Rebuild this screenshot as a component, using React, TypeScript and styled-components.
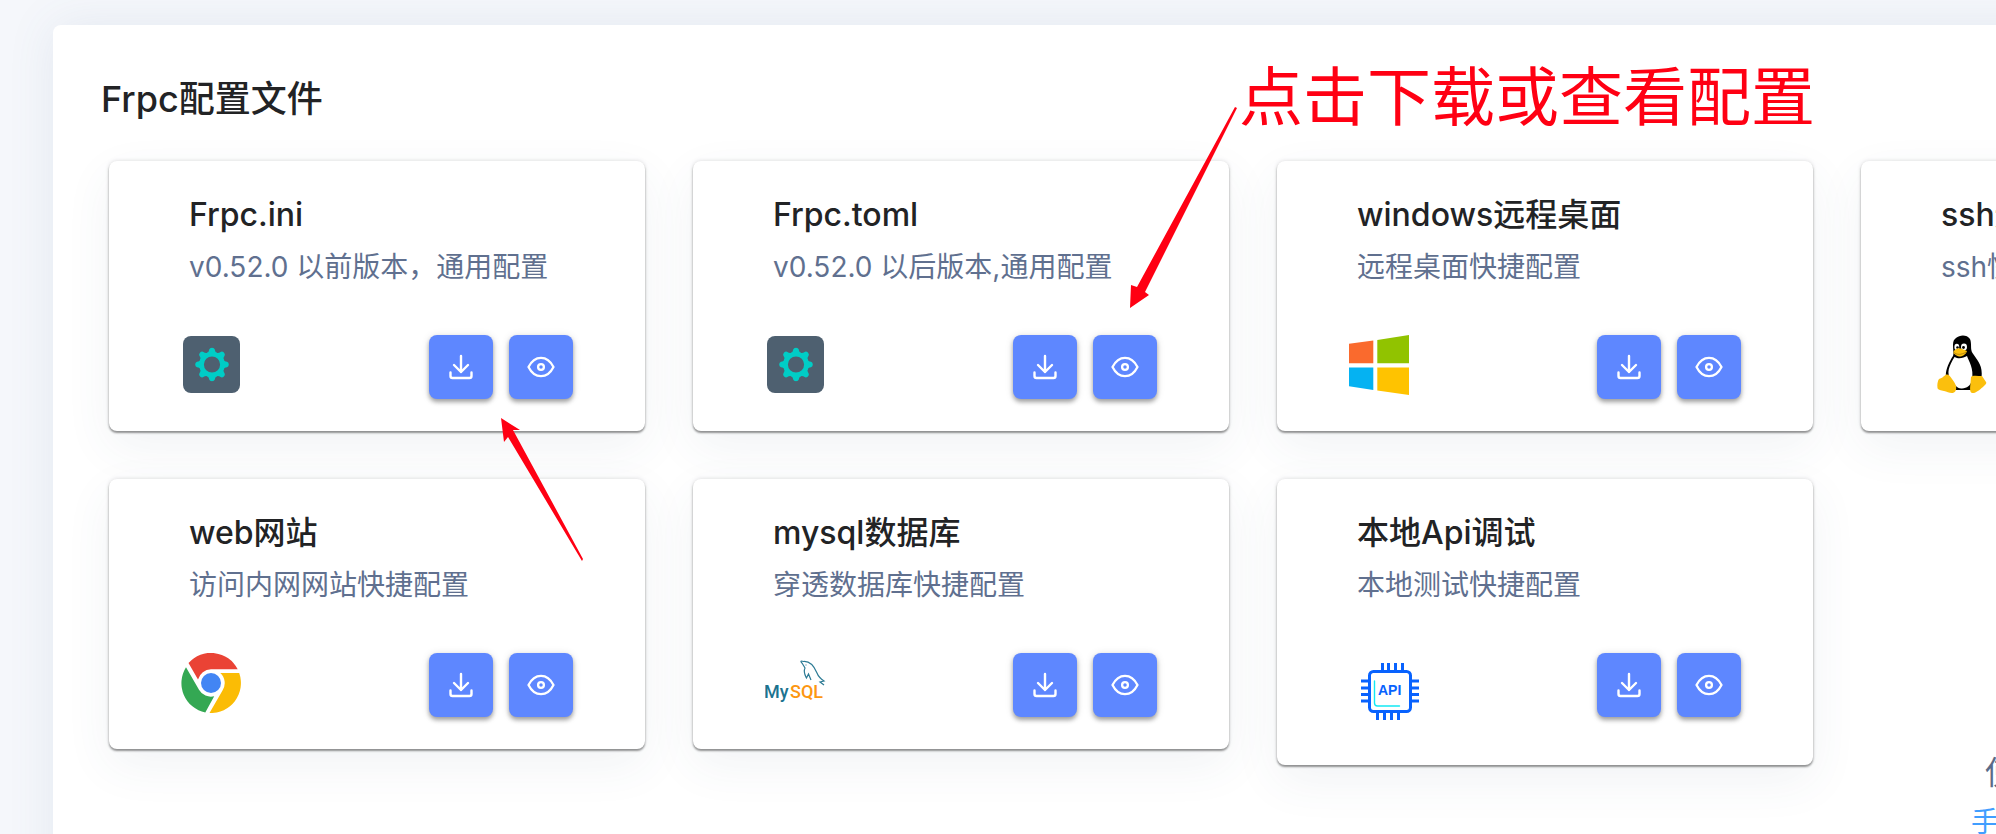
import React from "react";
import styled, { createGlobalStyle } from "styled-components";

const GlobalStyle = createGlobalStyle`
  *, *::before, *::after { box-sizing: border-box; }
  html { height: 100%; overflow: hidden; }
  body {
    margin: 0;
    height: 100%;
    overflow: hidden;
    background: #f5f7fb;
    color: #222325;
    font-family: Inter, "Noto Sans CJK SC", sans-serif;
  }
  h1, h2, p { margin: 0; }
`;

const Page = styled.main`
  position: relative;
  min-width: max-content;
  padding: 25px 53px 0;
`;

const Panel = styled.section`
  min-width: max-content;
  padding: 48px 48px 160px;
  border-radius: 8px;
  background: #fff;
  box-shadow: 0 0 48px rgba(76, 110, 145, 0.1);
`;

const PanelTitle = styled.h1`
  font-size: 36px;
  line-height: 52px;
  font-weight: 500;
`;

const Grid = styled.div`
  display: grid;
  grid-template-columns: repeat(4, minmax(536px, 1fr));
  gap: 48px;
  align-items: start;
  padding: 36px 8px 0;
`;

const Card = styled.article`
  display: flex;
  flex-direction: column;
  padding: 32px 72px;
  border-radius: 8px;
  background: #fff;
  box-shadow:
    0 2px 2px rgba(0, 0, 0, 0.38),
    0 0 4px rgba(0, 0, 0, 0.14),
    0 16px 48px rgba(60, 80, 110, 0.07);
`;

const CardTitle = styled.h2`
  padding-left: 8px;
  font-size: 32px;
  line-height: 44px;
  font-weight: 500;
  white-space: nowrap;
`;

const CardText = styled.p`
  padding: 8px 0 0 8px;
  font-size: 28px;
  line-height: 44px;
  font-weight: 400;
  color: #60708f;
  white-space: nowrap;
`;

const CardFooter = styled.div<{ $tall?: boolean }>`
  display: flex;
  align-items: flex-start;
  justify-content: space-between;
  height: ${(p) => (p.$tall ? 126 : 110)}px;
  padding-top: 46px;
`;

const Buttons = styled.div`
  display: flex;
  gap: 16px;
`;

const IconButton = styled.button`
  display: grid;
  place-items: center;
  width: 64px;
  height: 64px;
  padding: 0;
  border: 0;
  border-radius: 8px;
  background: #5e87ff;
  color: #fff;
  cursor: pointer;
  box-shadow:
    0 3px 4px rgba(0, 0, 0, 0.32),
    0 1px 8px rgba(0, 0, 0, 0.12);
`;

const Help = styled.aside`
  padding-top: 270px;
  text-align: center;
  font-size: 32px;
  line-height: 48px;
  color: #5b6b88;
`;

const HelpLink = styled.a`
  font-size: 28px;
  color: #409eff;
  text-decoration: none;
`;

const Callout = styled.p`
  position: absolute;
  left: 1239px;
  top: 49px;
  font-size: 64px;
  line-height: 96px;
  color: #ff0013;
  white-space: nowrap;
`;

const Arrows = styled.svg`
  position: absolute;
  left: 0;
  top: 0;
  pointer-events: none;
`;

const DownloadIcon = () => (
  <svg width="24" height="26" viewBox="0 0 24 26" fill="none" stroke="currentColor" strokeWidth="2.4" strokeLinecap="round" strokeLinejoin="round" aria-hidden="true">
    <path d="M12 2v16M5 11l7 7 7-7M1.500 18.500v3.500q0 2 2 2h17q2 0 2-2v-3.500" />
  </svg>
);

const EyeIcon = () => (
  <svg width="28" height="22" viewBox="0 0 28 22" fill="none" stroke="currentColor" strokeWidth="2.300" strokeLinejoin="round" aria-hidden="true">
    <path d="M1.500 11C4.500 5 9 1.800 14 1.800S23.500 5 26.500 11C23.500 17 19 20.200 14 20.200S4.500 17 1.500 11Z" />
    <circle cx="14" cy="11" r="2.900" />
  </svg>
);

const GearLogo = () => (
  <svg width="60" height="60" viewBox="0 0 60 60" aria-hidden="true">
    <rect x="2" y="1" width="57" height="57" rx="8" fill="#4e6070" />
    <g transform="translate(31 29.500)" fill="#00cdc6">
      {[0, 45, 90, 135, 180, 225, 270, 315].map((a) => (
        <path key={a} transform={`rotate(${a})`} d="M-6-11C-3.500-12-3.200-13-2.800-15Q-2.300-16.800 0-16.800T2.800-15C3.200-13 3.500-12 6-11Z" />
      ))}
      <circle r="10.400" fill="none" stroke="#00cdc6" strokeWidth="4.600" />
    </g>
  </svg>
);

const WindowsLogo = () => (
  <svg width="60" height="60" viewBox="0 0 60 60" aria-hidden="true">
    <path fill="#fa6a2d" d="M0 8.800 24.300 5.500V28.200H0Z" />
    <path fill="#91c300" d="M28.300 4.900 60 0V28.200H28.300Z" />
    <path fill="#05b2f2" d="M0 32.500H24.300V55L0 51.200Z" />
    <path fill="#ffc300" d="M28.300 32.500H60V60L28.300 55.400Z" />
  </svg>
);

const LinuxLogo = () => (
  <svg width="60" height="60" viewBox="-4 0 60 60" aria-hidden="true">
    <path fill="#000" d="M19 3C23-.5 30-.5 33 4 35 9 33 14 35.500 18 40 25 46 30 44.500 42L41 55H14L9 42C8 36 12 27 16 21 17 18 16 15 16 10 16 6 17 4.500 19 3Z" />
    <path fill="#fff" d="M17.500 22C23 25 27 22 30 21 32 27 37 33 35 45 33.500 51 30 53 25 53.500 20 54 17 49 14 45 9 38 12 31 17.500 22Z" />
    <ellipse cx="19.800" cy="12" rx="2.400" ry="3.200" fill="#fff" />
    <ellipse cx="27" cy="12" rx="3" ry="3.400" fill="#fff" />
    <circle cx="20.500" cy="12.500" r="1.300" />
    <circle cx="26.500" cy="12.500" r="1.400" />
    <path fill="#fbbf0d" d="M16.500 16.500C19 13 23 12.500 25 14L30 16C29 20 24 22 22 21.500 20 21 18 19.500 16.500 18.500Z" />
    <path fill="none" stroke="#96710c" strokeWidth=".7" d="M17 17.500C20 20 24 20 29 17.200" />
    <path fill="#fbbf0d" d="M8.500 40C11 38.500 13 41 15 44 18 48 20.500 52 18.500 56 16 60 11 57 7 56 4 55 1 55 .5 53 0 50 .5 46 2 44 5 43 6 42 8.500 40Z" />
    <path fill="#fbbf0d" d="M34 42C35 40 41 41 45 41L49 47C50 48.500 48 50 46 52 42 55 39 58.500 35 58 32.500 57 33 53 33.500 48Z" />
  </svg>
);

const ChromeLogo = () => (
  <svg width="60" height="60" viewBox="0 0 60 60" aria-hidden="true">
    <circle cx="30" cy="30" r="10" fill="#4285f4" />
    <path fill="#ea4335" d="M7.500 10A30 30 0 0 1 56.700 16.300H30A13.700 13.700 0 0 0 17 26.500Z" />
    <path fill="#34a853" d="M5 14.200 18 36.700A13.700 13.700 0 0 0 33.200 43.300L24.300 59.500A30 30 0 0 1 5 14.200Z" />
    <path fill="#fbbc05" d="M58.200 20A30 30 0 0 1 28.500 60L41.500 37.500A13.700 13.700 0 0 0 39.300 20Z" />
  </svg>
);

const MysqlLogo = () => (
  <svg width="64" height="60" viewBox="0 0 64 60" aria-hidden="true">
    <g fontFamily="Roboto, sans-serif" fontSize="18" fontWeight="500">
      <text x="-1" y="45" fill="#1c7390">My</text>
      <text x="25" y="45" fill="#fd9710">SQL</text>
    </g>
    <path fill="none" stroke="#2c7a94" strokeWidth="1.200" d="M37 10C35 8 36 7.500 38.500 8.500 44 8 49 13 52 20 53.500 24 56 26 59 28L55 29 59 32M37 10 40 15C38 19 40 22 41.500 25L43.500 21 46 27M40.500 12h1" />
  </svg>
);

const ApiLogo = () => (
  <svg width="60" height="60" viewBox="0 0 60 60" fill="none" stroke="#0862fe" strokeWidth="3" strokeLinecap="round" aria-hidden="true">
    <rect x="9.500" y="10.500" width="41" height="40" rx="4" />
    <path strokeLinecap="butt" d="M22.500 2v8M28.500 2v8M35.500 2v8M42.500 2v8M17.500 51v8M24.500 51v8M31.500 51v8M38.500 51v8M1 20h8M1 27h8M1 33.500h8M1 40h8M51 20h8M51 27h8M51 33.500h8M51 40h8" />
    <path stroke="#13e9f4" strokeWidth="1.400" d="M14.500 20v22q0 3 3 3h22" />
    <text x="18" y="34" fill="#0862fe" stroke="none" fontFamily="Liberation Sans, sans-serif" fontSize="14" fontWeight="700">API</text>
  </svg>
);

const LogoSlot = styled.span<{ $inset?: boolean }>`
  display: block;
  flex: none;
  height: 60px;
  margin: ${(p) => (p.$inset ? "8px 0 0 11px" : "0")};
`;

type Entry = { title: string; text: string; Logo: () => React.ReactElement; tall?: boolean };

const entries: Entry[] = [
  { title: "Frpc.ini", text: "v0.52.0 以前版本，通用配置", Logo: GearLogo },
  { title: "Frpc.toml", text: "v0.52.0 以后版本,通用配置", Logo: GearLogo },
  { title: "windows远程桌面", text: "远程桌面快捷配置", Logo: WindowsLogo },
  { title: "ssh远程连接", text: "ssh快捷配置", Logo: LinuxLogo },
  { title: "web网站", text: "访问内网网站快捷配置", Logo: ChromeLogo },
  { title: "mysql数据库", text: "穿透数据库快捷配置", Logo: MysqlLogo },
  { title: "本地Api调试", text: "本地测试快捷配置", Logo: ApiLogo, tall: true },
];

export default function App() {
  return (
    <>
      <GlobalStyle />
      <Page>
        <Panel>
          <PanelTitle>Frpc配置文件</PanelTitle>
          <Grid>
            {entries.map(({ title, text, Logo, tall }) => (
              <Card key={title}>
                <CardTitle>{title}</CardTitle>
                <CardText>{text}</CardText>
                <CardFooter $tall={tall}>
                  <LogoSlot $inset={tall}>
                    <Logo />
                  </LogoSlot>
                  <Buttons>
                    <IconButton type="button" aria-label={`下载 ${title}`}><DownloadIcon /></IconButton>
                    <IconButton type="button" aria-label={`查看 ${title}`}><EyeIcon /></IconButton>
                  </Buttons>
                </CardFooter>
              </Card>
            ))}
            <Help>
              <p>使用过程中遇到问题</p>
              <HelpLink href="#manual">手动配置请查看 使用文档</HelpLink>
            </Help>
          </Grid>
        </Panel>
        <Callout>点击下载或查看配置</Callout>
        <Arrows width="1300" height="600" viewBox="0 0 1300 600" fill="#ff0013" aria-hidden="true">
          <path d="M1235 107 1237 108 1145 292 1149 295 1130 308 1131 285 1137 287Z" />
          <path d="M582 561 583 559 513 430 520 430 501 418 504 442 508 437Z" />
        </Arrows>
      </Page>
    </>
  );
}
